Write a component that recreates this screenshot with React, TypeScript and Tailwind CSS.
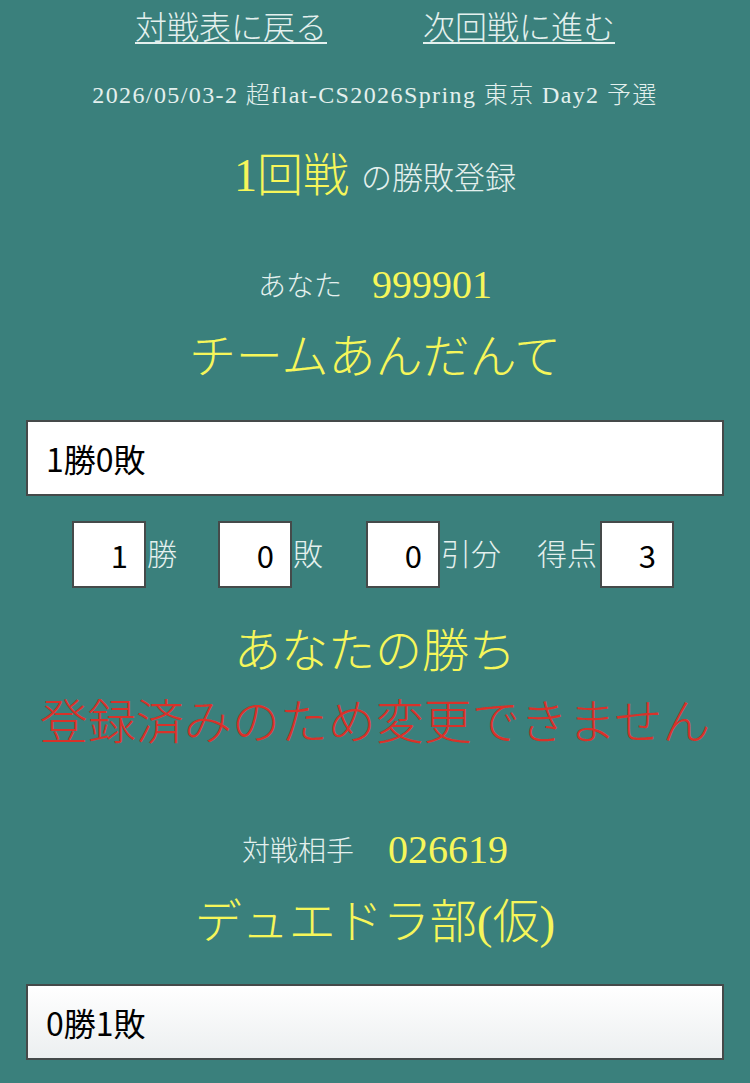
import React from "react";

const serif = "font-['Liberation_Serif','Noto_Sans_CJK_JP',serif] font-light";
const sans = "font-['Noto_Sans_CJK_JP','Liberation_Sans',sans-serif] font-normal";

function ScoreBox({ value }: { value: string }) {
  return (
    <div
      className={`w-[74px] h-[67px] bg-white border-2 border-[#454a4a] flex items-center justify-end pr-4 text-[31px] text-black ${sans}`}
    >
      {value}
    </div>
  );
}

function ResultField({ text, soft }: { text: string; soft?: boolean }) {
  return (
    <div
      className={`mx-[26px] h-[76px] border-2 border-[#454a4a] flex items-center pl-[18px] text-[32px] text-black ${sans} ${
        soft ? "bg-gradient-to-b from-white to-[#eceff0]" : "bg-white"
      }`}
    >
      {text}
    </div>
  );
}

export default function App() {
  return (
    <div className={`min-h-[1083px] w-[750px] bg-[#3a807c] text-[#e4f0ee] ${serif} overflow-hidden`}>
      <div className="h-[56px] flex items-center justify-center gap-[96px] text-[32px] leading-none">
        <a className="underline decoration-2 underline-offset-[3px]">対戦表に戻る</a>
        <a className="underline decoration-2 underline-offset-[3px]">次回戦に進む</a>
      </div>

      <div className="mt-[24px] h-[30px] flex items-center justify-center text-[24px] tracking-[1.4px] leading-none">
        2026/05/03-2 超flat-CS2026Spring 東京 Day2 予選
      </div>

      <div className="mt-[36px] h-[60px] flex items-center justify-center leading-none">
        <span className="text-[46px] text-[#f6f65a]">1回戦</span>
        <span className="text-[31px] ml-3 mt-1">の勝敗登録</span>
      </div>

      <div className="mt-[59px] h-[40px] flex items-center justify-center leading-none">
        <span className="text-[28px] mt-1">あなた</span>
        <span className="text-[40px] text-[#f6f65a] ml-[30px]">999901</span>
      </div>
      <div className="mt-[22px] h-[60px] flex items-center justify-center text-[47px] text-[#f6f65a] leading-none">
        チームあんだんて
      </div>

      <div className="mt-[33px]">
        <ResultField text="1勝0敗" />
      </div>

      <div className="mt-[25px] flex justify-center items-center text-[30px] leading-none -ml-[4px]">
        <ScoreBox value="1" />
        <span className="ml-px">勝</span>
        <div className="ml-[41px]">
          <ScoreBox value="0" />
        </div>
        <span className="ml-px">敗</span>
        <div className="ml-[43px]">
          <ScoreBox value="0" />
        </div>
        <span className="ml-px">引分</span>
        <span className="ml-[36px] mr-[3px]">得点</span>
        <ScoreBox value="3" />
      </div>

      <div className="mt-[33px] h-[60px] flex items-center justify-center text-[47px] text-[#f6f65a] leading-none">
        あなたの勝ち
      </div>
      <div className="mt-[12px] h-[60px] flex items-center justify-center text-[48px] text-[#d8322a] leading-none">
        登録済みのため変更できません
      </div>

      <div className="mt-[77px] h-[40px] flex items-center justify-center leading-none">
        <span className="text-[28px] mt-1">対戦相手</span>
        <span className="text-[40px] text-[#f6f65a] ml-[34px]">026619</span>
      </div>
      <div className="mt-[22px] h-[60px] flex items-center justify-center text-[47px] text-[#f6f65a] leading-none">
        デュエドラ部(仮)
      </div>

      <div className="mt-[32px]">
        <ResultField text="0勝1敗" soft />
      </div>
    </div>
  );
}
